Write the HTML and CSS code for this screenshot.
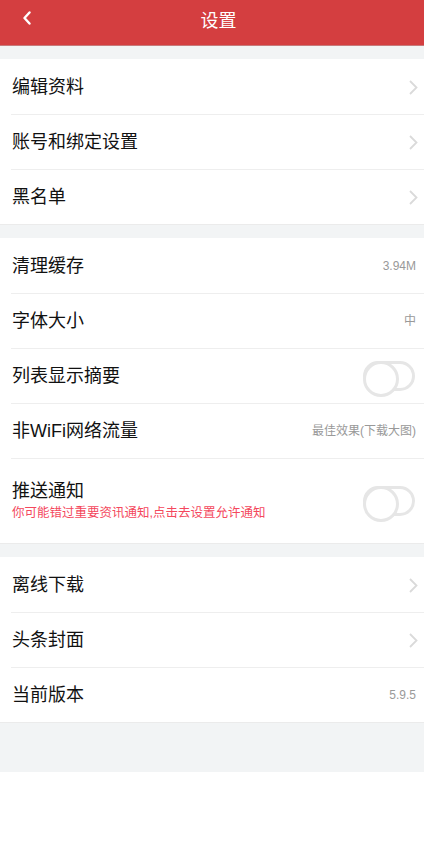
FILE: index.html
```html
<!DOCTYPE html>
<html lang="zh-CN">
<head>
<meta charset="utf-8">
<title>设置</title>
<link rel="stylesheet" href="styles.css">
</head>
<body>
<header class="topbar">
  <span class="back">
    <svg width="10" height="14" viewBox="0 0 10 14"><path d="M7.5 1.5 L2.5 7 L7.5 12.5" fill="none" stroke="#fff" stroke-width="2.4" stroke-linecap="round" stroke-linejoin="round"/></svg>
  </span>
  <h1 class="title">设置</h1>
</header>
<main class="page">
  <section class="group">
    <div class="row"><span class="label">编辑资料</span><span class="arrow"><svg width="9" height="15" viewBox="0 0 9 15"><path d="M1 1 L7.5 7.5 L1 14" fill="none" stroke="#dadada" stroke-width="1.8"/></svg></span></div>
    <div class="row"><span class="label">账号和绑定设置</span><span class="arrow"><svg width="9" height="15" viewBox="0 0 9 15"><path d="M1 1 L7.5 7.5 L1 14" fill="none" stroke="#dadada" stroke-width="1.8"/></svg></span></div>
    <div class="row"><span class="label">黑名单</span><span class="arrow"><svg width="9" height="15" viewBox="0 0 9 15"><path d="M1 1 L7.5 7.5 L1 14" fill="none" stroke="#dadada" stroke-width="1.8"/></svg></span></div>
  </section>
  <section class="group">
    <div class="row"><span class="label">清理缓存</span><span class="value">3.94M</span></div>
    <div class="row"><span class="label">字体大小</span><span class="value">中</span></div>
    <div class="row"><span class="label">列表显示摘要</span><span class="switch"></span></div>
    <div class="row"><span class="label">非WiFi网络流量</span><span class="value">最佳效果(下载大图)</span></div>
    <div class="row row-tall">
      <div class="stack">
        <span class="label">推送通知</span>
        <span class="hint">你可能错过重要资讯通知,点击去设置允许通知</span>
      </div>
      <span class="switch"></span>
    </div>
  </section>
  <section class="group">
    <div class="row"><span class="label">离线下载</span><span class="arrow"><svg width="9" height="15" viewBox="0 0 9 15"><path d="M1 1 L7.5 7.5 L1 14" fill="none" stroke="#dadada" stroke-width="1.8"/></svg></span></div>
    <div class="row"><span class="label">头条封面</span><span class="arrow"><svg width="9" height="15" viewBox="0 0 9 15"><path d="M1 1 L7.5 7.5 L1 14" fill="none" stroke="#dadada" stroke-width="1.8"/></svg></span></div>
    <div class="row"><span class="label">当前版本</span><span class="value">5.9.5</span></div>
  </section>
  <div class="footer-space"></div>
</main>
</body>
</html>
```
FILE: styles.css
```css
* { box-sizing: border-box; }
html, body {
  margin: 0;
  padding: 0;
  background: #fff;
  font-family: "Liberation Sans", "Noto Sans CJK SC", sans-serif;
  color: #111;
}
.topbar {
  height: 46px;
  background: #d43e40;
  border-bottom: 1px solid #c77a7b;
  display: flex;
  align-items: center;
  justify-content: center;
  position: relative;
  padding-left: 13px;
}
.back {
  position: absolute;
  left: 22px;
  top: 11px;
  width: 10px;
  height: 14px;
  display: flex;
}
.title {
  margin: 0 0 3px 0;
  font-size: 18px;
  font-weight: normal;
  color: #fff;
  line-height: 24px;
}
.page {
  background: #f2f4f5;
  padding-top: 13px;
  display: flex;
  flex-direction: column;
  gap: 13px;
}
.group {
  background: #fff;
  padding-top: 1px;
  padding-left: 11px;
  border-bottom: 1px solid #ebebeb;
}
.row {
  height: 55px;
  display: flex;
  align-items: center;
  justify-content: space-between;
  padding-left: 1px;
  padding-right: 8px;
  border-bottom: 1px solid #eeeeee;
}
.row:last-child {
  height: 54px;
  border-bottom: none;
}
.row.row-tall {
  height: 84px;
}
.label {
  font-size: 18px;
  line-height: 24px;
  color: #111;
}
.value {
  font-size: 12px;
  color: #999;
  line-height: 16px;
}
.arrow {
  display: flex;
  margin-right: -2px;
}
.stack {
  display: flex;
  flex-direction: column;
  gap: 1px;
  padding-bottom: 2px;
}
.hint {
  font-size: 12.5px;
  line-height: 18px;
  color: #f4485d;
}
.switch {
  width: 52px;
  height: 30px;
  border: 3px solid #e6e6e6;
  border-radius: 15px;
  position: relative;
  margin-right: 1px;
  background: #fff;
}
.switch::after {
  content: "";
  position: absolute;
  left: -3px;
  top: -3px;
  width: 30px;
  height: 30px;
  border: 3px solid #e6e6e6;
  border-radius: 50%;
  background: #fff;
}
.footer-space {
  height: 36px;
  margin-bottom: 0;
}
```
